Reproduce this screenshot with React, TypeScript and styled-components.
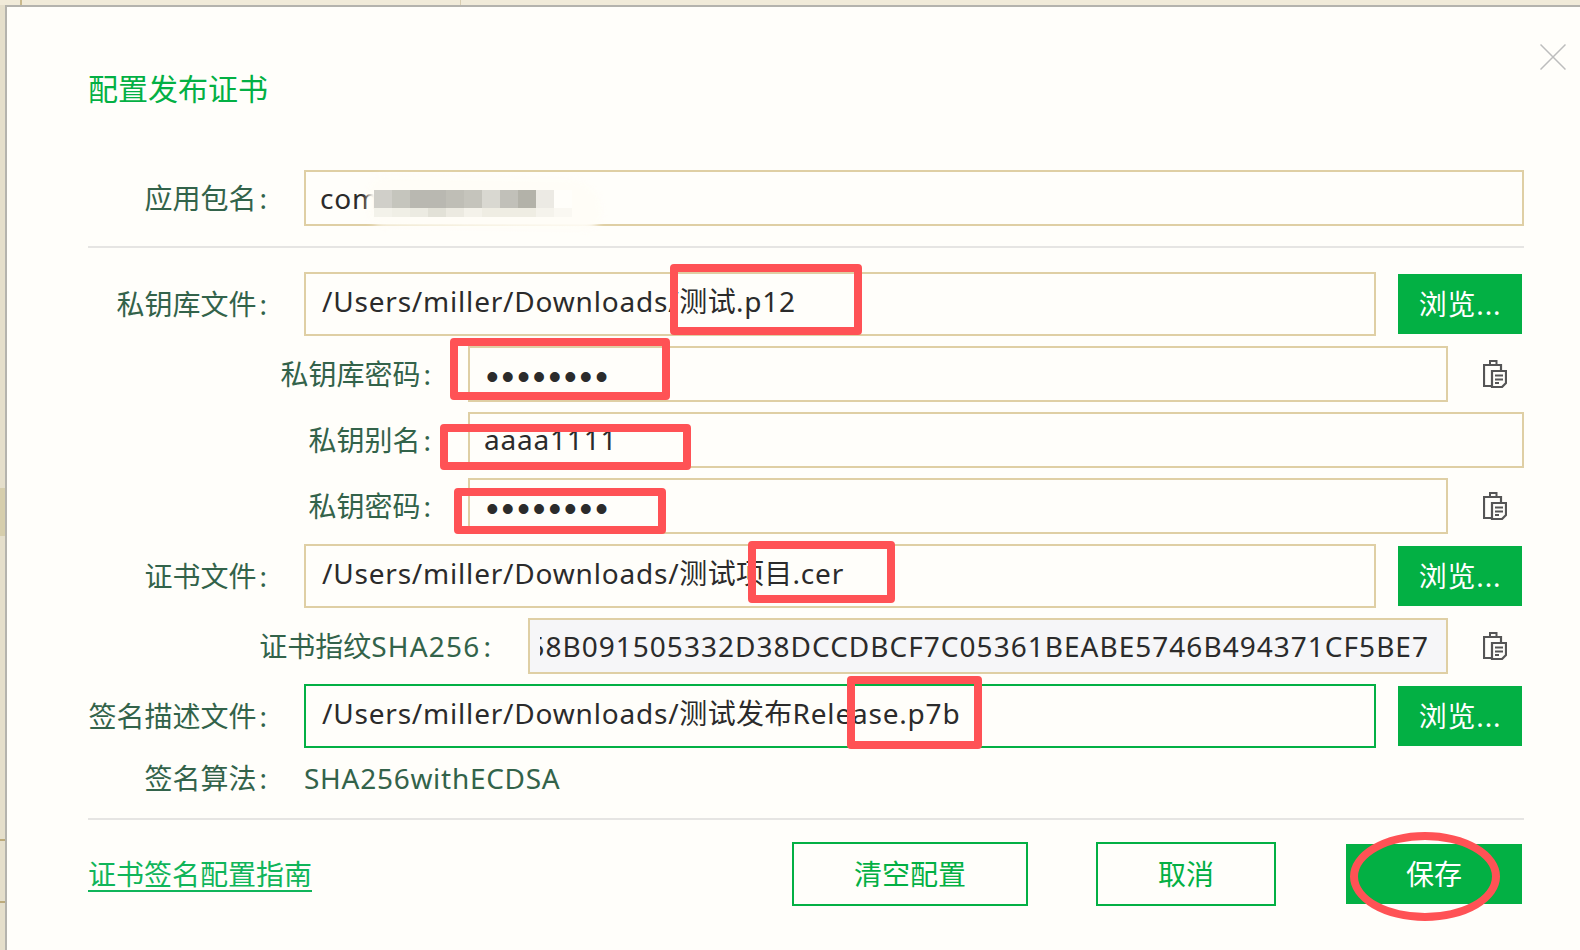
import React from "react";
import styled, { createGlobalStyle } from "styled-components";

const FONT = `"Noto Sans", "Noto Sans CJK SC", sans-serif`;
const GREEN = "#03b044";
const TAN = "#dfcfa4";

const Global = createGlobalStyle`
  html, body { margin: 0; padding: 0; background: #e9e3d0; }
  * { box-sizing: border-box; }
`;

const Page = styled.div`
  position: relative;
  width: 1580px;
  height: 950px;
  overflow: hidden;
  display: flex;
  flex-direction: column;
  font-family: ${FONT};
  font-size: 28px;
`;

const TopStrip = styled.div`
  height: 5px;
  flex: none;
  overflow: hidden;
  padding-left: 128px;
  background:
    linear-gradient(#c9b98c, #c9b98c) 20px 0 / 2px 5px no-repeat,
    linear-gradient(#d8cdb0, #d8cdb0) 460px 0 / 1px 5px no-repeat,
    #f1ebd9;
`;

const StripText = styled.div`
  margin-top: -34px;
  line-height: 40px;
  color: #555;
  font-weight: 500;
`;

const Body = styled.div`
  flex: 1;
  display: flex;
  min-height: 0;
`;

const LeftStrip = styled.div`
  width: 5px;
  flex: none;
  background:
    linear-gradient(#d6ceac, #d6ceac) 0 483px / 5px 48px no-repeat,
    linear-gradient(#bcab7c, #bcab7c) 0 834px / 5px 2px no-repeat,
    linear-gradient(#bcab7c, #bcab7c) 0 896px / 5px 2px no-repeat,
    #e5dfcb;
`;

const Modal = styled.div`
  position: relative;
  flex: 1;
  min-width: 0;
  border-top: 2px solid #b4b3ad;
  border-left: 2px solid #b4b3ad;
  background: #fffefa;
  padding: 62px 56px 0 81px;
`;

const CloseIcon = styled.svg`
  position: absolute;
  top: 37px;
  right: 14px;
  width: 26px;
  height: 26px;
`;

const Title = styled.h1`
  margin: 0 0 61px;
  font-size: 30px;
  line-height: 40px;
  font-weight: 400;
  color: ${GREEN};
`;

const Row = styled.div`
  display: flex;
  align-items: center;
`;

const Label = styled.label<{ $width: number }>`
  flex: none;
  width: ${(p) => p.$width}px;
  margin: -1px 37px 0 0;
  text-align: right;
  white-space: nowrap;
  color: #33634a;
  line-height: 40px;
`;

const Colon = styled.span`
  margin-left: 3px;
`;

const LabelLatin = styled.span`
  letter-spacing: 1.2px;
`;

const Field = styled.div<{ $tall?: boolean; $active?: boolean }>`
  position: relative;
  flex: 1;
  min-width: 0;
  height: ${(p) => (p.$tall ? 64 : 56)}px;
  display: flex;
  align-items: center;
  padding: ${(p) => (p.$tall ? "0 16px 8px" : "0 14px 0")};
  border: 2px solid ${(p) => (p.$active ? GREEN : TAN)};
  background: #fffefa;
  color: #2b2b2b;
  white-space: pre;
  letter-spacing: 0.8px;
`;

const Cjk = styled.span`
  letter-spacing: 0.3px;
`;

const ReadonlyField = styled(Field)`
  padding: 0 17px 0 10px;
  background: #f6f6f8;
`;

const Dots = styled.span`
  font-family: "Liberation Sans", sans-serif;
  font-size: 36px;
  letter-spacing: 3px;
  margin: 6px 0 0 2px;
`;

const RaisedText = styled.span`
  margin-top: -2px;
`;

const FingerprintClip = styled.div`
  flex: 1;
  min-width: 0;
  overflow: hidden;
  display: flex;
  justify-content: flex-end;
`;

const Fingerprint = styled.span`
  flex: none;
  letter-spacing: 1.02px;
`;

const Smudge = styled.div`
  position: absolute;
  left: 62px;
  top: 6px;
  width: 234px;
  height: 50px;
  border-radius: 30px 60px 30px 30px;
  background: #fffdf7;
  filter: blur(3px);
  transform: rotate(1deg);
`;

const Mosaic = styled.div`
  position: absolute;
  left: 68px;
  top: 18px;
  display: grid;
  grid-template-columns: repeat(11, 18px);
  grid-auto-rows: 18px 9px;
`;

const MosaicCell = styled.i<{ $c: string }>`
  display: block;
  background: ${(p) => p.$c};
`;

const Divider = styled.div<{ $top: number; $bottom: number }>`
  height: 2px;
  background: #e6e5e3;
  margin: ${(p) => p.$top}px 0 ${(p) => p.$bottom}px;
`;

const FieldStack = styled.div`
  display: flex;
  flex-direction: column;
  gap: 10px;
`;

const BrowseButton = styled.button`
  flex: none;
  width: 124px;
  height: 60px;
  margin: 0 2px 0 22px;
  padding: 0 0 2px;
  border: none;
  background: ${GREEN};
  color: #fff;
  font: inherit;
  letter-spacing: 0.8px;
`;

const CopySlot = styled.div`
  flex: none;
  width: 76px;
  padding-left: 35px;
  display: flex;
`;

const StaticValue = styled.div`
  line-height: 40px;
  color: #33634a;
  letter-spacing: 0.72px;
  margin-top: -2px;
`;

const AlgoRow = styled(Row)`
  margin-top: 11px;
`;

const Footer = styled.div`
  display: flex;
  align-items: center;
  padding-right: 2px;
`;

const GuideLink = styled.a`
  color: #10b55a;
  line-height: 32px;
  border-bottom: 2px solid #10b55a;
  margin-right: auto;
  margin-top: 2px;
`;

const OutlineButton = styled.button<{ $width: number; $gap: number }>`
  width: ${(p) => p.$width}px;
  height: 64px;
  margin-right: ${(p) => p.$gap}px;
  padding: 0 0 2px;
  border: 2px solid ${GREEN};
  background: transparent;
  color: ${GREEN};
  font: inherit;
`;

const SaveButton = styled.button`
  width: 176px;
  height: 60px;
  padding: 0 0 2px;
  border: none;
  background: ${GREEN};
  color: #fff;
  font: inherit;
`;

const RedBox = styled.div<{ $x: number; $y: number; $w: number; $h: number }>`
  position: absolute;
  left: ${(p) => p.$x}px;
  top: ${(p) => p.$y}px;
  width: ${(p) => p.$w}px;
  height: ${(p) => p.$h}px;
  border: 8px solid #ff5255;
  border-radius: 4px;
  pointer-events: none;
`;

const RedEllipse = styled(RedBox)`
  border-radius: 50%;
`;

const mosaicColors = [
  "#d0cfc9", "#c5c5bd", "#b9b8b1", "#b9b8b1", "#bfbeb6", "#c5c4bc", "#d9d8d1", "#c1c0b9", "#b3b2a9", "#eceae4", "#fffefa",
  "#f3f2ea", "#f0efe6", "#ecebe2", "#e2e1d7", "#eceae1", "#f4f2ea", "#efede3", "#efede3", "#efede3", "#f5f3ec", "#faf8f2",
];

function Clipboard() {
  return (
    <svg width="24" height="28" viewBox="0 0 24 28" fill="none">
      <path d="M7 5V1h6.5v4" stroke="#555" strokeWidth="2" />
      <path d="M8 26H1V5h17v5" stroke="#555" strokeWidth="2.2" />
      <path d="M9 11h14v12l-4 4H9z" stroke="#555" strokeWidth="2.2" />
      <path d="M12 15.5h8M12 19.5h8M12 23h4" stroke="#555" strokeWidth="2" />
    </svg>
  );
}

const PATH = "/Users/miller/Downloads/";

export default function App() {
  return (
    <Page>
      <Global />
      <TopStrip>
        <StripText>配置</StripText>
      </TopStrip>
      <Body>
        <LeftStrip />
        <Modal>
          <CloseIcon viewBox="0 0 26 26">
            <path d="M0.5 0.5L25.5 25.5M25.5 0.5L0.5 25.5" stroke="#bdbdbd" strokeWidth="1.5" />
          </CloseIcon>
          <Title>配置发布证书</Title>
          <Row>
            <Label $width={179}>应用包名<Colon>:</Colon></Label>
            <Field>
              com
              <Smudge />
              <Mosaic>
                {mosaicColors.map((c, i) => (
                  <MosaicCell key={i} $c={c} />
                ))}
              </Mosaic>
            </Field>
          </Row>
          <Divider $top={20} $bottom={24} />
          <FieldStack>
            <Row>
              <Label $width={179}>私钥库文件<Colon>:</Colon></Label>
              <Field $tall>
                <span>{PATH}<Cjk>测试</Cjk>.p12</span>
              </Field>
              <BrowseButton>浏览...</BrowseButton>
            </Row>
            <Row>
              <Label $width={343}>私钥库密码<Colon>:</Colon></Label>
              <Field>
                <Dots>••••••••</Dots>
              </Field>
              <CopySlot>
                <Clipboard />
              </CopySlot>
            </Row>
            <Row>
              <Label $width={343}>私钥别名<Colon>:</Colon></Label>
              <Field>
                <RaisedText>aaaa1111</RaisedText>
              </Field>
            </Row>
            <Row>
              <Label $width={343}>私钥密码<Colon>:</Colon></Label>
              <Field>
                <Dots>••••••••</Dots>
              </Field>
              <CopySlot>
                <Clipboard />
              </CopySlot>
            </Row>
            <Row>
              <Label $width={179}>证书文件<Colon>:</Colon></Label>
              <Field $tall>
                <span>{PATH}<Cjk>测试项目</Cjk>.cer</span>
              </Field>
              <BrowseButton>浏览...</BrowseButton>
            </Row>
            <Row>
              <Label $width={403}>证书指纹<LabelLatin>SHA256</LabelLatin><Colon>:</Colon></Label>
              <ReadonlyField>
                <FingerprintClip>
                  <Fingerprint>58B091505332D38DCCDBCF7C05361BEABE5746B494371CF5BE7</Fingerprint>
                </FingerprintClip>
              </ReadonlyField>
              <CopySlot>
                <Clipboard />
              </CopySlot>
            </Row>
            <Row>
              <Label $width={179}>签名描述文件<Colon>:</Colon></Label>
              <Field $tall $active>
                <span>{PATH}<Cjk>测试发布</Cjk>Release.p7b</span>
              </Field>
              <BrowseButton>浏览...</BrowseButton>
            </Row>
          </FieldStack>
          <AlgoRow>
            <Label $width={179}>签名算法<Colon>:</Colon></Label>
            <StaticValue>SHA256withECDSA</StaticValue>
          </AlgoRow>
          <Divider $top={20} $bottom={22} />
          <Footer>
            <GuideLink>证书签名配置指南</GuideLink>
            <OutlineButton $width={236} $gap={68}>清空配置</OutlineButton>
            <OutlineButton $width={180} $gap={70}>取消</OutlineButton>
            <SaveButton>保存</SaveButton>
          </Footer>
        </Modal>
      </Body>
      <RedBox $x={670} $y={264} $w={192} $h={71} />
      <RedBox $x={450} $y={338} $w={220} $h={62} />
      <RedBox $x={440} $y={424} $w={251} $h={46} />
      <RedBox $x={454} $y={488} $w={212} $h={46} />
      <RedBox $x={748} $y={541} $w={147} $h={62} />
      <RedBox $x={847} $y={676} $w={135} $h={73} />
      <RedEllipse $x={1350} $y={832} $w={150} $h={89} />
    </Page>
  );
}
